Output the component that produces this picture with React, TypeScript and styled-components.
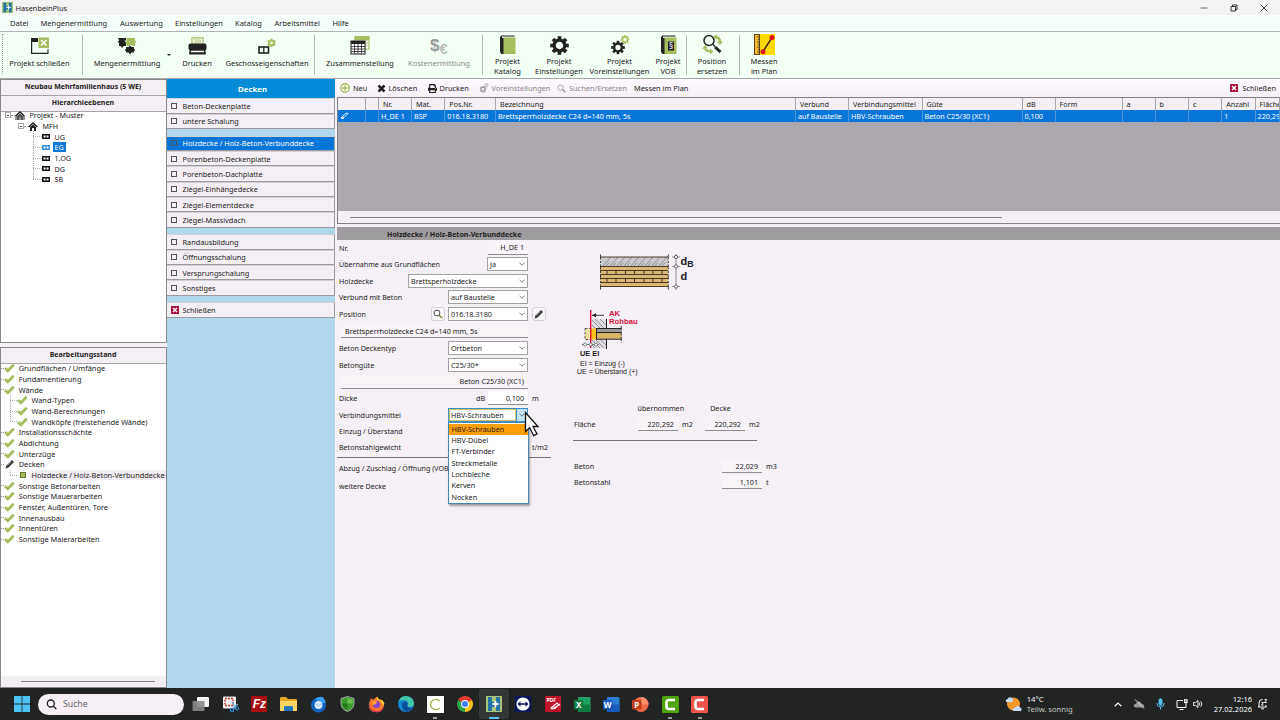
import { ReactNode } from "react";
import styled, { createGlobalStyle } from "styled-components";
import { FaCog, FaPrint } from "react-icons/fa";

const GREEN = "#a5bd5e";

const menuItems = [
  { label: "Datei", width: 30.5 },
  { label: "Mengenermittlung", width: 79.5 },
  { label: "Auswertung", width: 55 },
  { label: "Einstellungen", width: 60 },
  { label: "Katalog", width: 39.5 },
  { label: "Arbeitsmittel", width: 58 },
  { label: "Hilfe", width: 30 },
];

const deckenGroups = [
  ["Beton-Deckenplatte", "untere Schalung"],
  [
    "Holzdecke / Holz-Beton-Verbunddecke",
    "Porenbeton-Deckenplatte",
    "Porenbeton-Dachplatte",
    "Ziegel-Einhängedecke",
    "Ziegel-Elementdecke",
    "Ziegel-Massivdach",
  ],
  ["Randausbildung", "Öffnungsschalung", "Versprungschalung", "Sonstiges"],
];

const progress = [
  { label: "Grundflächen / Umfänge" },
  { label: "Fundamentierung" },
  { label: "Wände" },
  { label: "Wand-Typen", level: 1 },
  { label: "Wand-Berechnungen", level: 1 },
  { label: "Wandköpfe (freistehende Wände)", level: 1, last: true },
  { label: "Installationsschächte" },
  { label: "Abdichtung" },
  { label: "Unterzüge" },
  { label: "Decken", icon: "pen" },
  {
    label: "Holzdecke / Holz-Beton-Verbunddecke",
    level: 1,
    last: true,
    icon: "box",
  },
  { label: "Sonstige Betonarbeiten" },
  { label: "Sonstige Mauerarbeiten" },
  { label: "Fenster, Außentüren, Tore" },
  { label: "Innenausbau" },
  { label: "Innentüren" },
  { label: "Sonstige Malerarbeiten" },
];

const columns = [
  ["", ""],
  ["", ""],
  ["Nr.", "H_DE 1"],
  ["Mat.", "BSP"],
  ["Pos.Nr.", "016.18.3180"],
  ["Bezeichnung", "Brettsperrholzdecke C24 d=140 mm, 5s"],
  ["Verbund", "auf Baustelle"],
  ["Verbindungsmittel", "HBV-Schrauben"],
  ["Güte", "Beton C25/30 (XC1)"],
  ["dB", "0,100"],
  ["Form", ""],
  ["a", ""],
  ["b", ""],
  ["c", ""],
  ["Anzahl", "1"],
  ["Fläche", "220,292"],
];

const connectors = [
  "HBV-Schrauben",
  "HBV-Dübel",
  "FT-Verbinder",
  "Streckmetalle",
  "Lochbleche",
  "Kerven",
  "Nocken",
];

/* ---------- icons ---------- */

const AppIcon = ({ size = 11 }: { size?: number }) => (
  <svg width={size} height={size} viewBox="0 0 16 16">
    <rect width="16" height="16" fill="#a9c77c" />
    <path d="M2 1h4v5h4V1h4v14h-4v-4H6v4H2z" fill="#2572a4" />
    <path d="M9.500 5v6M6.500 8h6" stroke="#fff" strokeWidth="1.800" />
  </svg>
);

const ProjectCloseIcon = () => (
  <svg width="20" height="18" viewBox="0 0 20 18">
    <path d="M1 1h7v4H2.200V15.800H17.500V12H18.500V17H1z" fill="#222" />
    <rect x="8.500" y="0.500" width="10.500" height="10.500" fill={GREEN} />
    <path d="M11 3l5.500 5.500M16.500 3L11 8.500" stroke="#fff" strokeWidth="1.700" />
  </svg>
);

const PuzzleIcon = () => (
  <svg width="20" height="18" viewBox="0 0 20 18">
    <path d="M1 1h8v2l-1.500 1L9 5v4H6.500L5 11 3.500 9H2V6L.5 5 2 3.500z" fill="#222" />
    <path d="M9.500 1H18v2.500l1.200 1.200L18 6v3h-3l-1-1.500L12.500 9h-3V6.500L8 5l1.500-1z" fill={GREEN} />
    <path d="M9 10h2.500l1.500-1.500L14.500 10H17v2l1.500 1L17 14v1.500h-2.500L13 17.500 11.500 15.500H9V14l-1.500-1L9 12z" fill="#222" />
  </svg>
);

const PrinterIcon = () => (
  <svg width="19" height="18" viewBox="0 0 19 18">
    <path d="M4 7V.8h11V7z" fill="#fff" stroke={GREEN} strokeWidth="1.200" />
    <path d="M6 3h7M6 5h7" stroke={GREEN} />
    <rect x="0.500" y="6.500" width="18" height="7" rx="2" fill="#222" />
    <path d="M2 10.500h15l1 7H1z" fill="#222" />
    <path d="M3.200 13.800h12.600l.3 1.500H2.900z" fill="#fff" />
  </svg>
);

const StoreyIcon = () => (
  <svg width="18" height="18" viewBox="0 0 18 18">
    <g transform="translate(9 1.500)">
      <FaCog size={9} color={GREEN} />
    </g>
    <rect x="1" y="10" width="9.500" height="6" fill="none" stroke="#222" strokeWidth="1.600" />
    <path d="M5.800 10v6" stroke="#222" strokeWidth="1.300" />
  </svg>
);

const SheetIcon = () => (
  <svg width="20" height="19" viewBox="0 0 20 19">
    <rect x="5" y="0.600" width="14" height="12.500" fill="#fff" stroke={GREEN} />
    <path d="M5 1h14v3H5zM5 7h14M5 10h14M15 3v10M12 3v10" fill={GREEN} stroke={GREEN} strokeWidth=".8" />
    <rect x="1" y="5" width="14" height="13" fill="#fff" stroke="#222" />
    <path d="M1 5h14v3H1z" fill="#222" />
    <path d="M1 10.500h14M1 13h14M1 15.500h14M4.500 8v10M8 8v10M11.500 8v10" stroke="#222" strokeWidth=".8" />
  </svg>
);

const CostIcon = () => (
  <CostGlyph>
    <b>$</b>
    <i>€</i>
  </CostGlyph>
);

const BookIcon = ({ sign }: { sign?: string }) => (
  <svg width="17" height="20" viewBox="0 0 17 20">
    <path d="M2.500 0.500h13V19h-13L1 17V2z" fill="#222" />
    <path d="M3 1.500h13V3H3z" fill="#eee" />
    <rect x="4.500" y="2.500" width="12" height="16.500" fill={GREEN} />
    {sign && (
      <>
        <rect x="8" y="6.500" width="6" height="9" fill="#222" />
        <text x="11" y="13.800" fontSize="8" textAnchor="middle" fill="#fff">
          {sign}
        </text>
      </>
    )}
  </svg>
);

const Gear = ({ size, color }: { size: number; color: string }) => (
  <svg width={size} height={size} viewBox="-10 -10 20 20">
    <circle r="5.600" fill="none" stroke={color} strokeWidth="3.400" />
    {[0, 45, 90, 135, 180, 225, 270, 315].map((a) => (
      <rect key={a} x="-1.900" y="-9.800" width="3.800" height="4" fill={color} transform={`rotate(${a})`} />
    ))}
  </svg>
);

const GearsIcon = ({ size = 20, dark = "#222", light = GREEN }) => (
  <svg width={size} height={size} viewBox="0 0 20 20">
    <g transform="translate(1 5.500)">
      <Gear size={14} color={dark} />
    </g>
    <g transform="translate(10.500 0)">
      <Gear size={9} color={light} />
    </g>
  </svg>
);

const ReplaceIcon = () => (
  <svg width="21" height="21" viewBox="0 0 21 21">
    <circle cx="7" cy="6.500" r="5" fill="none" stroke="#222" strokeWidth="1.500" />
    <path d="M11 10.500l2 2" stroke="#222" strokeWidth="1.500" />
    <path d="M13 13l5.500 5" stroke="#222" strokeWidth="3" />
    <path d="M13 3c3 0 5 2 5 5" fill="none" stroke={GREEN} strokeWidth="2.400" />
    <path d="M14.500 0v6L11 3zM15 7.500h6L18 11z" fill={GREEN} />
    <path d="M9 17.500c-3 0-5-1-6-3" fill="none" stroke={GREEN} strokeWidth="2.400" />
    <path d="M8 14.500v6l3.500-3zM0 15l3-4 3 3z" fill={GREEN} />
  </svg>
);

const MeasureIcon = () => (
  <svg width="21" height="21" viewBox="0 0 21 21">
    <rect width="21" height="21" fill="#ffd900" />
    <rect x="0.500" y="0.500" width="5" height="20" fill="#f2b632" stroke="#5b4513" />
    <path d="M3 3h3M4 5.500h2M3 8h3M4 10.500h2M3 13h3M4 15.500h2M3 18h3" stroke="#333" strokeWidth=".8" />
    <path d="M9 17.500l9-14" stroke="#4a2c10" strokeWidth="1.500" />
    <circle cx="18" cy="3.500" r="2.500" fill="#e01018" />
    <circle cx="9" cy="17.800" r="2.500" fill="#e01018" />
  </svg>
);

const CloseIcon = () => (
  <svg width="8" height="8" viewBox="0 0 8 8">
    <rect width="8" height="8" fill="#a80f3c" />
    <path d="M2 2l4 4M6 2L2 6" stroke="#fff" strokeWidth="1.500" />
  </svg>
);

const CheckIcon = () => (
  <svg width="11" height="10" viewBox="0 0 11 10">
    <path d="M1 5.200l2.900 2.600L9.700 1.800" fill="none" stroke={GREEN} strokeWidth="2.900" />
  </svg>
);

const PenIcon = ({ size = 10 }: { size?: number }) => (
  <svg width={size} height={size} viewBox="0 0 10 10">
    <path d="M.5 9.500l1-3L7 1l2 2-5.500 5.500z" fill="#333" />
    <path d="M2.500 6.700l4-4" stroke="#ddd" strokeWidth=".6" />
  </svg>
);

const HouseIcon = ({ double }: { double?: boolean }) => (
  <svg width="10" height="9" viewBox="0 0 10 9">
    <path d="M.7 5L5 1l4.300 4" fill="none" stroke="#222" strokeWidth="1.400" />
    <path d="M2 5l3-2.500L8 5v4H6V6H4v3H2z" fill={double ? "#555" : "#222"} />
    {double && <path d="M1 9V4.500M9 9V4.500M5 6v3" stroke="#222" />}
  </svg>
);

const FloorIcon = ({ active }: { active?: boolean }) => (
  <svg width="8" height="5" viewBox="0 0 8 5">
    <rect width="8" height="5" fill={active ? "#2b8ede" : "#111"} />
    <path d="M1.500 1.500h2v2h-2zM4.500 1.500h2v2h-2z" fill="#fff" />
  </svg>
);

const Chevron = () => (
  <svg width="6" height="4" viewBox="0 0 6 4">
    <path d="M.5.7L3 3.200 5.500.7" fill="none" stroke="#555" strokeWidth=".8" />
  </svg>
);

const LensIcon = ({ size = 10, color = "#333" }) => (
  <svg width={size} height={size} viewBox="0 0 10 10">
    <circle cx="4" cy="4" r="2.900" fill="#fff" stroke={color} strokeWidth=".9" />
    <path d="M6.200 6.200L9.200 9.200" stroke={color === "#333" ? "#7d8f3b" : color} strokeWidth="1.600" />
  </svg>
);

/* ---------- drawings of the slab ---------- */

const SlabDrawing = () => (
  <Drawing width="104" height="38" viewBox="598 253 104 38">
    <rect x="600.500" y="257" width="67.500" height="9.500" fill="#c9c8cc" />
    {[603, 610, 617, 624, 631, 638, 645, 652, 659].map((x) => (
      <path key={x} d={`M${x} 266l8-9M${x + 3} 266l3-3.400`} stroke="#777" strokeWidth=".7" />
    ))}
    <rect x="600.500" y="266.500" width="67.500" height="20" fill="#dab873" />
    <path
      d="M600 257h68M600 266.500h68M600 270.500h68M600 274.500h68M600 278.500h68M600 282.500h68M600 286.500h68"
      stroke="#3a2a18"
      strokeWidth=".9"
    />
    <path
      d="M607 270.500v4M616 270.500v4M625.500 270.500v4M634.500 270.500v4M644 270.500v4M653 270.500v4M662 270.500v4M607 278.500v4M616 278.500v4M625.500 278.500v4M634.500 278.500v4M644 278.500v4M653 278.500v4M662 278.500v4"
      stroke="#3a2a18"
      strokeWidth=".9"
    />
    <path d="M600.500 254.500v36M668.300 254.500v36" stroke="#333" strokeWidth=".9" strokeDasharray="5 1.500 2 1.500" />
    <path d="M676 254v36M672 257h8M672 266.500h8M672 286.500h8" stroke="#777" strokeWidth=".8" />
    <g fill="#fff" stroke="#444" strokeWidth=".8">
      <circle cx="676" cy="257" r="1.600" />
      <circle cx="676" cy="266.500" r="1.600" />
      <circle cx="676" cy="286.500" r="1.600" />
    </g>
    <text x="680.500" y="265" fontSize="11" fontWeight="700">
      d
    </text>
    <text x="687.300" y="267" fontSize="8.800" fontWeight="700">
      B
    </text>
    <text x="680.500" y="279.500" fontSize="11" fontWeight="700">
      d
    </text>
  </Drawing>
);

const SupportDrawing = () => (
  <Drawing width="66" height="68" viewBox="574 309 66 68">
    <path d="M592 319h14.500v10H592zM592 339h14.500v9.500H592z" fill="#dedce0" />
    <path
      d="M592 325l4 4M592 320l9 9M595 319l10 10M600 319l6 6M592 345l3 3M592 340l8 8M595 339l9 9M600 339l6 6"
      stroke="#777"
      strokeWidth=".7"
    />
    <path d="M606.500 319v10M606.500 339v10" stroke="#222" />
    <rect x="585" y="328.500" width="6" height="11" fill="#f9e3a2" stroke="#333" strokeWidth=".8" strokeDasharray="2.500 1.500" />
    <rect x="591" y="328.500" width="5.500" height="11" fill="#fdc21c" />
    <rect x="596.500" y="328.500" width="25" height="4" fill="#999" />
    <rect x="596.500" y="332.500" width="25" height="6.500" fill="#d9b56c" />
    <path d="M596.500 328.500h25M596.500 332.500h25M596.500 339.200h25M596.500 328v11.500" stroke="#222" />
    <path d="M621.200 326v17" stroke="#333" strokeDasharray="4 1.500" />
    <path d="M590.700 310v38" stroke="#d4103c" strokeWidth="1.400" />
    <path d="M592 315.300h12" stroke="#222" strokeWidth=".9" />
    <path d="M592 315.300l4-2v4z" fill="#222" />
    <path d="M582 344.500h17" stroke="#555" strokeWidth=".8" />
    <g fill="#fff" stroke="#555" strokeWidth=".7">
      <circle cx="585" cy="344.500" r="1.500" />
      <circle cx="590.700" cy="344.500" r="1.500" />
      <circle cx="596" cy="344.500" r="1.500" />
    </g>
    <g fill="#d4103c" fontSize="7.700" fontWeight="700">
      <text x="609" y="315.700">AK</text>
      <text x="609" y="324.300">Rohbau</text>
    </g>
    <text x="580" y="356.300" fontSize="7.400" fontWeight="700">
      UE EI
    </text>
    <text x="580" y="366" fontSize="7">
      EI = Einzug (-)
    </text>
    <text x="577" y="374" fontSize="7">
      UE = Überstand (+)
    </text>
  </Drawing>
);

/* ---------- parts ---------- */

const Select = ({ value, width, open }: { value: string; width: number; open?: boolean }) => (
  <SelectBox $width={width} $open={open}>
    {open ? <SelectFocus>{value}</SelectFocus> : <span>{value}</span>}
    <SelectArrow $open={open}>
      <Chevron />
    </SelectArrow>
  </SelectBox>
);

const ToolButton = ({ icon, label, width, gap = 0, muted }: {
  icon: ReactNode;
  label: string[];
  width: number;
  gap?: number;
  muted?: boolean;
}) => (
  <Tool $width={width} $gap={gap} $muted={muted}>
    <ToolIcon>{icon}</ToolIcon>
    <ToolLabel $two={label.length > 1}>
      {label.map((line) => (
        <span key={line}>{line}</span>
      ))}
    </ToolLabel>
  </Tool>
);

function LeftPane() {
  return (
    <LeftColumn>
      <Panel $height={264}>
        <PanelTitle>Neubau Mehrfamilienhaus (5 WE)</PanelTitle>
        <PanelTitle>Hierarchieebenen</PanelTitle>
        <Tree>
          <TreeRow $indent={4}>
            <Expander />
            <Dash $width={4} />
            <HouseIcon double />
            <TreeLabel>Projekt - Muster</TreeLabel>
          </TreeRow>
          <TreeRow $indent={17}>
            <Expander />
            <Dash $width={4} />
            <HouseIcon />
            <TreeLabel>MFH</TreeLabel>
          </TreeRow>
          {["UG", "EG", "1.OG", "DG", "SB"].map((floor, i) => (
            <TreeRow key={floor} $indent={32}>
              <Branch $last={i === 4} $width={9} />
              <FloorIcon active={floor === "EG"} />
              <TreeLabel $active={floor === "EG"}>{floor}</TreeLabel>
            </TreeRow>
          ))}
        </Tree>
      </Panel>
      <Panel $grow>
        <PanelTitle>Bearbeitungsstand</PanelTitle>
        <ProgressTree>
          {progress.map(({ label, level, last, icon }) => (
            <TreeRow key={label} $indent={level ? 9 : 0} $shade={icon === "box"}>
              {level ? <Branch $last={last} $width={6.5} /> : <Dash $width={2.7} />}
              <ProgressIcon>
                {icon === "pen" ? <PenIcon /> : icon === "box" ? <GreenBox /> : <CheckIcon />}
              </ProgressIcon>
              <span>{label}</span>
            </TreeRow>
          ))}
        </ProgressTree>
        <PanelScroll>
          <ScrollLine $width={134} />
        </PanelScroll>
      </Panel>
    </LeftColumn>
  );
}

function DeckenPane() {
  return (
    <MiddleColumn>
      <MiddleTitle>Decken</MiddleTitle>
      {deckenGroups.map((group, g) => (
        <NavGroup key={g}>
          {group.map((label) => (
            <NavRow key={label} $active={label.startsWith("Holzdecke")}>
              <NavBox />
              {label}
            </NavRow>
          ))}
        </NavGroup>
      ))}
      <NavGroup>
        <NavRow>
          <CloseIcon />
          Schließen
        </NavRow>
      </NavGroup>
    </MiddleColumn>
  );
}

function Form() {
  return (
    <FormArea>
      <FormColumn>
        <Row $height={15.5}>
          <Label>Nr.</Label>
          <Value $width={40}>H_DE 1</Value>
        </Row>
        <Row $height={17}>
          <Label>Übernahme aus Grundflächen</Label>
          <Select value="Ja" width={41} />
        </Row>
        <Row $height={16.5}>
          <Label>Holzdecke</Label>
          <Select value="Brettsperholzdecke" width={120} />
        </Row>
        <Row $height={16.7}>
          <Label>Verbund mit Beton</Label>
          <Select value="auf Baustelle" width={80} />
        </Row>
        <Row $height={17}>
          <Label>Position</Label>
          <SmallButton>
            <LensIcon />
          </SmallButton>
          <Select value="016.18.3180" width={80} />
          <SmallButton $after>
            <PenIcon />
          </SmallButton>
        </Row>
        <Row $height={17}>
          <Value $width={187} $left>
            Brettsperrholzdecke C24 d=140 mm, 5s
          </Value>
        </Row>
        <Row $height={17}>
          <Label>Beton Deckentyp</Label>
          <Select value="Ortbeton" width={80} />
        </Row>
        <Row $height={16.8}>
          <Label>Betongüte</Label>
          <Select value="C25/30*" width={80} />
        </Row>
        <Row $height={16.8}>
          <Value $width={187}>Beton C25/30 (XC1)</Value>
        </Row>
        <Row $height={16.2}>
          <Label>Dicke</Label>
          <Unit $width={12}>dB</Unit>
          <Value $width={40} $white>
            0,100
          </Value>
          <Suffix>m</Suffix>
        </Row>
        <Row $height={16.5}>
          <Label>Verbindungsmittel</Label>
          <SelectAnchor>
            <Select value="HBV-Schrauben" width={80} open />
            <Options>
              {connectors.map((c, i) => (
                <Option key={c} $active={i === 0}>
                  {c}
                </Option>
              ))}
            </Options>
            <Pointer width="16" height="28" viewBox="0 0 16 28">
              <path
                d="M1.500 1.500v19l4.200-3.800 4 8 3.300-1.700-4-7.500h5z"
                fill="#fff"
                stroke="#111"
                strokeWidth="1.300"
              />
            </Pointer>
          </SelectAnchor>
        </Row>
        <Row $height={16}>
          <Label>Einzug / Überstand</Label>
        </Row>
        <Row $height={16.5}>
          <Label>Betonstahlgewicht</Label>
          <Suffix>t/m2</Suffix>
        </Row>
        <Rule $width={214} />
        <Row $height={20.5}>
          <Label>Abzug / Zuschlag / Öffnung (VOB)</Label>
        </Row>
        <Row $height={15}>
          <Label>weitere Decke</Label>
        </Row>
      </FormColumn>
      <ResultColumn>
        <SlabDrawing />
        <SupportDrawing />
        <ResultHead>
          <span>übernommen</span>
          <span>Decke</span>
        </ResultHead>
        <ResultRow $top={2}>
          <ResultLabel $width={65}>Fläche</ResultLabel>
          <Value $width={40}>220,292</Value>
          <ResultUnit>m2</ResultUnit>
          <Value $width={40}>220,292</Value>
          <ResultUnit>m2</ResultUnit>
        </ResultRow>
        <Rule $width={184} $top={8} />
        <ResultRow $top={17}>
          <ResultLabel $width={149}>Beton</ResultLabel>
          <Value $width={40}>22,029</Value>
          <ResultUnit>m3</ResultUnit>
        </ResultRow>
        <ResultRow>
          <ResultLabel $width={149}>Betonstahl</ResultLabel>
          <Value $width={40}>1,101</Value>
          <ResultUnit>t</ResultUnit>
        </ResultRow>
      </ResultColumn>
    </FormArea>
  );
}

function Workspace() {
  return (
    <WorkColumn>
      <Actions>
        <Action $width={35.5}>
          <svg width="10" height="10" viewBox="0 0 9 9">
            <circle cx="4.500" cy="4.500" r="3.800" fill="#fff" stroke={GREEN} strokeWidth="1.300" />
            <path d="M4.500 2v5M2 4.500h5" stroke={GREEN} strokeWidth="1.300" />
          </svg>
          Neu
        </Action>
        <Action $width={51}>
          <svg width="9" height="9" viewBox="0 0 9 9">
            <path d="M1.500 1.500l6 6M7.500 1.500l-6 6" stroke="#222" strokeWidth="2.500" />
          </svg>
          Löschen
        </Action>
        <Action $width={51}>
          <FaPrint size={9} color="#222" />
          Drucken
        </Action>
        <Action $width={78.5} $muted>
          <GearsIcon size={10} dark="#999" light="#aaa" />
          Voreinstellungen
        </Action>
        <Action $width={77} $muted $plain>
          <LensIcon size={9} color="#999" />
          Suchen/Ersetzen
        </Action>
        <Action $width={60} $plain>
          Messen im Plan
        </Action>
        <ActionEnd>
          <CloseIcon />
          Schließen
        </ActionEnd>
      </Actions>
      <Table>
        <TableRow>
          {columns.map(([head], i) => (
            <HeadCell key={i}>{head}</HeadCell>
          ))}
        </TableRow>
        <TableRow $selected>
          {columns.map(([, value], i) => (
            <Cell key={i}>
              {i === 0 ? (
                <svg width="9" height="7" viewBox="0 0 9 7">
                  <path d="M1 6l5-5 2 .5-4 4zM1 6.300h3" fill="none" stroke="#fff" strokeWidth=".9" />
                </svg>
              ) : (
                value
              )}
            </Cell>
          ))}
        </TableRow>
        <TableEmpty />
        <TableScroll>
          <ScrollLine $width={652} />
        </TableScroll>
      </Table>
      <FormTitle>Holzdecke / Holz-Beton-Verbunddecke</FormTitle>
      <Form />
    </WorkColumn>
  );
}

function Taskbar() {
  return (
    <Bar>
      <TaskApps>
        <TaskIcon $width={22}>
          <svg width="16" height="16" viewBox="0 0 16 16">
            <path d="M0 0h7.600v7.600H0zM8.400 0H16v7.600H8.400zM0 8.400h7.600V16H0zM8.400 8.400H16V16H8.400z" fill="#4cc2f5" />
          </svg>
        </TaskIcon>
        <Search>
          <svg width="11" height="11" viewBox="0 0 11 11">
            <circle cx="4.800" cy="4.500" r="3.500" fill="none" stroke="#222" strokeWidth="1.300" />
            <path d="M7.300 7l3 3" stroke="#222" strokeWidth="1.300" />
          </svg>
          Suche
        </Search>
        <TaskIcon>
          <svg width="17" height="16" viewBox="0 0 17 16">
            <rect x="5" y="1" width="12" height="10" rx="1" fill="#f2f2f2" />
            <rect x="0.500" y="5" width="12" height="10" rx="1" fill="#888" opacity=".9" />
          </svg>
        </TaskIcon>
        <TaskIcon>
          <svg width="17" height="17" viewBox="0 0 17 17">
            <rect x="1" y="0.500" width="13" height="12" rx="1" fill="#eee" />
            <rect x="3" y="2.500" width="8" height="7" fill="none" stroke="#b5301e" strokeWidth="1.300" strokeDasharray="1.800 1.200" />
            <path d="M10 6l4 7M16 8l-6 5" stroke="#68b2dd" strokeWidth="1.400" />
            <circle cx="10" cy="14" r="1.700" fill="none" stroke="#2c87c9" strokeWidth="1.200" />
            <circle cx="15" cy="12.500" r="1.500" fill="none" stroke="#2c87c9" strokeWidth="1.200" />
          </svg>
        </TaskIcon>
        <TaskIcon>
          <Tile $bg="#a80e10">
            <i>Fz</i>
          </Tile>
        </TaskIcon>
        <TaskIcon>
          <svg width="17" height="15" viewBox="0 0 17 15">
            <path d="M0 1.500Q0 0 1.500 0H6l2 2h8q1 0 1 1v11H0z" fill="#e8a826" />
            <path d="M0 4h17v9q0 1-1 1H1q-1 0-1-1z" fill="#ffd563" />
            <path d="M4 14V10q0-1 1-1h7q1 0 1 1v4z" fill="#1f78bd" />
          </svg>
        </TaskIcon>
        <TaskIcon>
          <svg width="17" height="17" viewBox="0 0 17 17">
            <circle cx="8.500" cy="9" r="7.500" fill="#1566c4" />
            <path d="M5 3q4-3.500 8.500-1.500l2.500 5-4 1z" fill="#3a9cf0" />
            <circle cx="8.500" cy="9" r="3.900" fill="#dcecff" />
            <path d="M5.500 7.500l3 2.500 3-2.500" fill="none" stroke="#8dbcf0" />
          </svg>
        </TaskIcon>
        <TaskIcon>
          <svg width="15" height="16" viewBox="0 0 15 16">
            <path d="M7.500.5l6.500 2v5q0 5.500-6.500 8Q1 13 1 7.500v-5z" fill="#3a9a2e" stroke="#aaa" />
            <path d="M7.500 2l5 1.500v4H7.500z" fill="#6ac24e" />
            <path d="M2.500 7.500h5v6q-5-2-5-6z" fill="#267a1c" />
          </svg>
        </TaskIcon>
        <TaskIcon>
          <svg width="17" height="17" viewBox="0 0 17 17">
            <path d="M2 5l1-3 2 2Q7 2 9 .5l2 3q4 0 5.300 4Q16 16 8.500 16.300T.8 9Q1 6.500 2 5z" fill="#ff7a2a" />
            <path d="M9 .5l2 3q4 0 5.300 4Q16 10 14 8 13 4 9 4z" fill="#ffcf3c" />
            <path d="M2 8q0 6 6.500 7 5 0 7-5-1 6.300-7 6.300T1 9z" fill="#e8305e" />
            <circle cx="8.500" cy="8.500" r="3.500" fill="#7d48d0" />
            <path d="M4 6q3-2 5 0l-1 2-3 1z" fill="#ffa436" />
          </svg>
        </TaskIcon>
        <TaskIcon>
          <svg width="16" height="16" viewBox="0 0 16 16">
            <circle cx="8" cy="8" r="8" fill="#1682cf" />
            <path d="M.5 6Q2 .2 8 0q7 .5 8 7 0 4-4.500 4-2.500 0-1.500-2 1-3-2-4.500Q3 3 .5 6z" fill="#44c7a8" />
            <path d="M4 9q0-3 3.500-3 2 0 2.200 2-1.700 2 .3 3.300 2 1.200 4.700 0-2 4-6.200 4.500Q4 14 4 9z" fill="#0b4e96" />
          </svg>
        </TaskIcon>
        <TaskIcon $dot>
          <svg width="17" height="17" viewBox="0 0 17 17">
            <rect width="17" height="17" fill="#fff" />
            <path d="M12.800 5.200a5.200 5.200 0 1 0 0 6.600" fill="none" stroke="#9bb54b" strokeWidth="1.300" />
          </svg>
        </TaskIcon>
        <TaskIcon>
          <svg width="16" height="16" viewBox="0 0 16 16">
            <path d="M8 8L1.100 4A8 8 0 0 1 14.900 4z" fill="#e33b2e" />
            <path d="M8 8L14.900 4A8 8 0 0 1 8 16z" fill="#fbc116" />
            <path d="M8 8v8A8 8 0 0 1 1.100 4z" fill="#2ba24c" />
            <circle cx="8" cy="8" r="3.900" fill="#fff" />
            <circle cx="8" cy="8" r="3" fill="#3f7fe8" />
          </svg>
        </TaskIcon>
        <TaskIcon $active>
          <AppIcon size={16} />
        </TaskIcon>
        <TaskIcon>
          <svg width="16" height="16" viewBox="0 0 16 16">
            <rect width="16" height="16" rx="2" fill="#0b1660" />
            <circle cx="8" cy="8" r="6.600" fill="#fff" />
            <path d="M2.500 8l3-2.700v1.900h5V5.300l3 2.700-3 2.700V8.800h-5v1.900z" fill="#0b1660" />
          </svg>
        </TaskIcon>
        <TaskIcon>
          <svg width="16" height="16" viewBox="0 0 16 16">
            <rect width="16" height="16" rx="1" fill="#c0142b" />
            <text x="1.500" y="5.500" fontSize="5" fontWeight="700" fill="#fff">
              PDF
            </text>
            <path d="M6 12l6-5 2 2-7 4zM9 13l6-5" fill="none" stroke="#fff" strokeWidth="1.200" />
          </svg>
        </TaskIcon>
        {[
          ["X", "#21a366", "#107c41"],
          ["W", "#2b7cd3", "#185abd"],
        ].map(([letter, light, dark]) => (
          <TaskIcon key={letter}>
            <svg width="17" height="15" viewBox="0 0 17 15">
              <rect x="4" width="12.500" height="15" rx="1" fill={light} />
              <path d="M4 7.500h12.500V14q0 1-1 1H5q-1 0-1-1z" fill={dark} />
              <rect y="3" width="9.500" height="9.500" rx="1" fill={dark} />
              <text x="4.700" y="10.500" fontSize="8" fontWeight="700" textAnchor="middle" fill="#fff">
                {letter}
              </text>
            </svg>
          </TaskIcon>
        ))}
        <TaskIcon>
          <svg width="17" height="15" viewBox="0 0 17 15">
            <circle cx="9" cy="7.500" r="7.500" fill="#ed6c47" />
            <path d="M9 0a7.500 7.500 0 0 1 7.500 7.500H9z" fill="#ff8f6b" />
            <rect y="3" width="9.500" height="9.500" rx="1" fill="#c43e1c" />
            <text x="4.700" y="10.500" fontSize="8" fontWeight="700" textAnchor="middle" fill="#fff">
              P
            </text>
          </svg>
        </TaskIcon>
        {["#4da30b", "#ee544c"].map((color) => (
          <TaskIcon key={color} $dot>
            <svg width="17" height="17" viewBox="0 0 17 17">
              <rect width="17" height="17" rx="1.500" fill={color} />
              <path d="M13 4H7Q4.500 4 4.500 6.500v4Q4.500 13 7 13h6" fill="none" stroke="#fff" strokeWidth="2.600" />
            </svg>
          </TaskIcon>
        ))}
      </TaskApps>
      <Weather>
        <svg width="17" height="16" viewBox="0 0 17 16">
          <circle cx="8.500" cy="8" r="6.500" fill="#f3962c" />
          <path d="M1 6q-1-2.500 1.500-3Q3.500.5 6 1.500 8 1.500 8 4t-2 2.200z" fill="#c9d8f4" />
          <path d="M9 15q-2-.5-1-2.500 1-1 2-.5Q11 9.500 13.500 10q2 .5 2 2 1.500.5 1 2t-2 1z" fill="#c9d8f4" />
        </svg>
        <WeatherText>
          <span>14°C</span>
          <span>Teilw. sonnig</span>
        </WeatherText>
      </Weather>
      <Tray>
        <svg width="8" height="5" viewBox="0 0 8 5">
          <path d="M.7 4.200L4 1l3.300 3.200" fill="none" stroke="#fff" strokeWidth="1.200" />
        </svg>
        <svg width="12" height="10" viewBox="0 0 12 10">
          <path d="M3 8.500Q.5 8.500.7 6.500T3 4.700Q4 2 6.500 2.500q2 .5 2.300 2.500 2.500 0 2.500 2T9.500 8.500z" fill="#999" />
          <path d="M2 .5l9 9" stroke="#ddd" />
        </svg>
        <svg width="9" height="12" viewBox="0 0 9 12">
          <rect x="3" y="0.700" width="3" height="6.500" rx="1.500" fill="#5cc0e8" stroke="#5cc0e8" />
          <path d="M.8 5q0 4 3.700 4t3.700-4M4.500 9v2.500" fill="none" stroke="#5cc0e8" />
        </svg>
        <NetGroup>
          <svg width="12" height="11" viewBox="0 0 12 11">
            <path d="M7 1.500H1v7h9V5M3.500 10.500h4M10 1v4" fill="none" stroke="#fff" />
            <rect x="8.500" y="0.600" width="2.700" height="3" fill="none" stroke="#fff" strokeWidth=".9" />
          </svg>
          <svg width="10" height="10" viewBox="0 0 10 10">
            <path d="M.6 3.500h2L5 1.500v7L2.600 6.500h-2zM6.300 3.500q1 1.500 0 3M7.800 2.200q2 2.800 0 5.600" fill="none" stroke="#fff" strokeWidth=".9" />
          </svg>
        </NetGroup>
      </Tray>
      <Clock>
        <span>12:16</span>
        <span>27.02.2026</span>
      </Clock>
      <svg width="11" height="12" viewBox="0 0 11 12">
        <path d="M1 9h8.500M2 9V5q0-3.500 3.500-3.500M9 9V7M4 10.800h3" fill="none" stroke="#fff" />
        <path d="M4.500 4.500h2l-2 2.500h2M7.500 1.500h2.300L7.500 4.500h2.300" fill="none" stroke="#fff" strokeWidth=".9" />
      </svg>
    </Bar>
  );
}

export default function App() {
  return (
    <Window>
      <GlobalStyle />
      <TitleBar>
        <AppIcon />
        <AppName>HasenbeinPlus</AppName>
        <WindowButtons>
          <svg width="8" height="8" viewBox="0 0 8 8">
            <path d="M.5 4h7" stroke="#444" strokeWidth=".8" />
          </svg>
          <svg width="8" height="8" viewBox="0 0 8 8">
            <path d="M1 2.500h4.500V7H1zM2.500 2.500V1H7v4.500H5.500" fill="none" stroke="#222" strokeWidth=".9" />
          </svg>
          <svg width="8" height="8" viewBox="0 0 8 8">
            <path d="M.8.8l6.400 6.400M7.200.8L.8 7.200" stroke="#222" strokeWidth=".9" />
          </svg>
        </WindowButtons>
      </TitleBar>
      <MenuBar>
        {menuItems.map(({ label, width }) => (
          <MenuItem key={label} $width={width}>
            {label}
          </MenuItem>
        ))}
      </MenuBar>
      <Toolbar>
        <Grip />
        <ToolButton icon={<ProjectCloseIcon />} label={["Projekt schließen"]} width={70} gap={1.5} />
        <Divider $gap={7} />
        <ToolButton icon={<PuzzleIcon />} label={["Mengenermittlung"]} width={80} gap={4.5} />
        <MoreArrow />
        <ToolButton icon={<PrinterIcon />} label={["Drucken"]} width={40} gap={6} />
        <ToolButton icon={<StoreyIcon />} label={["Geschosseigenschaften"]} width={90} gap={5} />
        <Divider $gap={2} />
        <ToolButton icon={<SheetIcon />} label={["Zusammenstellung"]} width={80} gap={5} />
        <ToolButton icon={<CostIcon />} label={["Kostenermittlung"]} width={70} gap={4} muted />
        <Divider $gap={8} />
        <ToolButton icon={<BookIcon />} label={["Projekt", "Katalog"]} width={40} gap={4.5} />
        <ToolButton icon={<Gear size={19} color="#222" />} label={["Projekt", "Einstellungen"]} width={60} gap={1.5} />
        <ToolButton icon={<GearsIcon />} label={["Projekt", "Voreinstellungen"]} width={60} gap={0.5} />
        <ToolButton icon={<BookIcon sign="§" />} label={["Projekt", "VOB"]} width={30} gap={3.5} />
        <Divider $gap={3} />
        <ToolButton icon={<ReplaceIcon />} label={["Position", "ersetzen"]} width={40} gap={5} />
        <Divider $gap={7} />
        <ToolButton icon={<MeasureIcon />} label={["Messen", "im Plan"]} width={40} gap={4} />
      </Toolbar>
      <Body>
        <LeftPane />
        <DeckenPane />
        <Workspace />
      </Body>
      <Taskbar />
    </Window>
  );
}

/* ---------- styles ---------- */

const GlobalStyle = createGlobalStyle`
  * {
    box-sizing: border-box;
  }

  body {
    margin: 0;
    overflow: hidden;
    font-family: "Noto Sans", "Open Sans", sans-serif;
    font-size: 7.2px;
    color: #222;
    white-space: nowrap;
  }

  svg {
    flex: none;
  }
`;

const Window = styled.div`
  width: 1280px;
  height: 720px;
  display: flex;
  flex-direction: column;
  overflow: hidden;
  background: #f5f0f5;
`;

const TitleBar = styled.header`
  height: 15px;
  flex: none;
  display: flex;
  align-items: center;
  padding: 0 12px 0 2px;
  background: #f3f3f4;
`;

const AppName = styled.span`
  margin-left: 2.5px;
  font-size: 7.4px;
`;

const WindowButtons = styled.div`
  margin-left: auto;
  display: flex;
  gap: 22px;
`;

const MenuBar = styled.nav`
  height: 17px;
  flex: none;
  display: flex;
  align-items: center;
  padding-left: 10px;
  background: #f6fffb;
  border-bottom: 1px solid #b2b4b4;
`;

const MenuItem = styled.span<{ $width: number }>`
  width: ${({ $width }) => $width}px;
  font-size: 7.5px;
`;

const Toolbar = styled.div`
  height: 47px;
  flex: none;
  display: flex;
  background: #f4fff6;
  border-bottom: 1px solid #a4a6a6;
`;

const Grip = styled.div`
  height: 40px;
  margin: 2px 0 0 2px;
  border-left: 1px dotted #999;
`;

const Tool = styled.div<{ $width: number; $gap: number; $muted?: boolean }>`
  width: ${({ $width }) => $width}px;
  margin-left: ${({ $gap }) => $gap}px;
  display: flex;
  flex-direction: column;
  align-items: center;
  font-size: 7.5px;
  color: ${({ $muted }) => ($muted ? "#888" : "#222")};
`;

const ToolIcon = styled.div`
  height: 23px;
  display: flex;
  align-items: flex-end;
`;

const ToolLabel = styled.div<{ $two: boolean }>`
  display: flex;
  flex-direction: column;
  align-items: center;
  line-height: 10px;
  margin-top: ${({ $two }) => ($two ? 0.6 : 2.6)}px;
`;

const Divider = styled.div<{ $gap: number }>`
  width: 1px;
  height: 40px;
  margin: 3px 0 0 ${({ $gap }) => $gap}px;
  background: #b6bab7;
`;

const MoreArrow = styled.div`
  width: 4px;
  margin-top: 22px;
  height: 2px;
  border: 2px solid transparent;
  border-top-color: #222;
`;

const CostGlyph = styled.div`
  display: flex;
  font: 700 17px/18px "Liberation Sans", sans-serif;
  color: #999;

  i {
    font-style: normal;
    font-size: 15px;
    color: #bbb;
    margin: 3px 0 -3px 0;
  }
`;

const Body = styled.main`
  flex: 1;
  min-height: 0;
  display: flex;
`;

const LeftColumn = styled.aside`
  width: 167px;
  flex: none;
  display: flex;
  flex-direction: column;
  gap: 4px;
`;

const Panel = styled.section<{ $height?: number; $grow?: boolean }>`
  height: ${({ $height }) => ($height ? `${$height}px` : "auto")};
  flex: ${({ $grow }) => ($grow ? 1 : "none")};
  display: flex;
  flex-direction: column;
  background: #fff;
  border: 1px solid #8a888b;
`;

const PanelTitle = styled.h2`
  margin: 0;
  height: 16px;
  flex: none;
  display: flex;
  align-items: center;
  justify-content: center;
  padding: 0 1px 2px 0;
  font-size: 7px;
  background: #f4eff4;
  border-bottom: 1px solid #a5a3a6;
`;

const Tree = styled.div`
  display: flex;
  flex-direction: column;
  margin-top: -2px;
`;

const ProgressTree = styled(Tree)`
  margin-top: -1px;
  flex: 1;
  font-size: 7.4px;
`;

const TreeRow = styled.div<{ $indent: number; $shade?: boolean }>`
  height: 10.68px;
  flex: none;
  display: flex;
  align-items: center;
  margin-left: ${({ $indent }) => $indent}px;
  background: ${({ $shade }) =>
    $shade ? "linear-gradient(90deg, transparent 20px, #f2edf2 20px)" : "none"};
`;

const TreeLabel = styled.span<{ $active?: boolean }>`
  margin-left: 2.5px;
  padding: 0 2px;
  line-height: 10px;
  color: ${({ $active }) => ($active ? "#fff" : "#222")};
  background: ${({ $active }) => ($active ? "#0a78d4" : "none")};
`;

const Expander = styled.span`
  width: 6px;
  height: 6px;
  border: 1px solid #aaa;
  background: linear-gradient(#555, #555) center / 2px 1px no-repeat;
`;

const Dash = styled.span<{ $width: number }>`
  width: ${({ $width }) => $width}px;
  border-top: 1px dotted #999;
`;

const Branch = styled.span<{ $last?: boolean; $width: number }>`
  width: ${({ $width }) => $width}px;
  height: 100%;
  background:
    repeating-linear-gradient(#aaa 0 1px, transparent 1px 2px) 0 0 / 1px
      ${({ $last }) => ($last ? "55%" : "100%")} no-repeat,
    repeating-linear-gradient(90deg, #aaa 0 1px, transparent 1px 2px) 0 50% /
      100% 1px no-repeat;
`;

const ProgressIcon = styled.span`
  width: 12px;
  margin-right: 3px;
  display: flex;
  justify-content: center;
`;

const GreenBox = styled.span`
  width: 6px;
  height: 6px;
  background: ${GREEN};
  border: 1px solid #65752f;
`;

const PanelScroll = styled.div`
  height: 11px;
  padding: 5px 0 0 20px;
  background: #f4eff4;
`;

const ScrollLine = styled.div<{ $width: number }>`
  width: ${({ $width }) => $width}px;
  height: 1px;
  background: #858387;
`;

const MiddleColumn = styled.aside`
  width: 168px;
  flex: none;
  background: #b1d8ea;
  font-size: 7.3px;
`;

const MiddleTitle = styled.h1`
  margin: 0;
  height: 19.3px;
  display: flex;
  align-items: center;
  justify-content: center;
  padding-left: 3px;
  font-size: 7.8px;
  color: #fff;
  background: #048bd8;
`;

const NavGroup = styled.div`
  margin-bottom: 6.7px;
`;

const NavRow = styled.div<{ $active?: boolean }>`
  height: 15.35px;
  display: flex;
  align-items: center;
  padding-left: 4px;
  gap: 3.5px;
  color: ${({ $active }) => ($active ? "#fff" : "#222")};
  background: ${({ $active }) => ($active ? "#0875d8" : "#f4eff4")};
  border: 1px solid #9b9a9e;
  border-top-color: #d2d0d4;
  border-left: 0;
`;

const NavBox = styled.span`
  width: 6px;
  height: 6px;
  margin: 0 2px 0 0;
  border: 1px solid #555;
`;

const WorkColumn = styled.section`
  flex: 1;
  min-width: 0;
  display: flex;
  flex-direction: column;
  padding-left: 2px;
`;

const Actions = styled.div`
  height: 18px;
  flex: none;
  display: flex;
  align-items: center;
  padding: 0 4px 0 3px;
  background: linear-gradient(#fffaff, #f5f0f5);
`;

const Action = styled.div<{ $width: number; $muted?: boolean; $plain?: boolean }>`
  width: ${({ $width }) => $width}px;
  height: 12px;
  display: flex;
  align-items: center;
  gap: 3px;
  font-size: 7.4px;
  color: ${({ $muted }) => ($muted ? "#888" : "#222")};

  & + & {
    border-left: ${({ $plain }) => ($plain ? 0 : 1)}px solid #d0ccd0;
    padding-left: ${({ $plain }) => ($plain ? 1 : 3.5)}px;
  }
`;

const ActionEnd = styled.div`
  margin-left: auto;
  display: flex;
  align-items: center;
  gap: 4px;
  font-size: 7.4px;
`;

const Table = styled.div`
  height: 127px;
  flex: none;
  display: flex;
  flex-direction: column;
  border: 1px solid #858086;
  border-right: 0;
`;

const TableRow = styled.div<{ $selected?: boolean }>`
  height: 12px;
  flex: none;
  display: grid;
  grid-template-columns: 28px 13px 33px 33.3px 50.7px 300px 53px 73.6px 100px 33px 67px 33px 33.4px 33.3px 33.3px 1fr;
  color: ${({ $selected }) => ($selected ? "#fff" : "#222")};
  background: ${({ $selected }) => ($selected ? "#0876d9" : "#f4eff4")};
`;

const HeadCell = styled.div`
  display: flex;
  align-items: center;
  min-width: 0;
  overflow: hidden;
  padding-left: 4px;
  border-right: 1px solid #a9a5aa;
`;

const Cell = styled(HeadCell)`
  padding: 0 0 1px 2px;
  border-right-color: #4c96da;
`;

const TableEmpty = styled.div`
  flex: 1;
  background: #ada8ae;
`;

const TableScroll = styled.div`
  height: 12px;
  padding: 6px 0 0 12px;
  background: #f4eff4;
`;

const FormTitle = styled.h2`
  margin: 3px 0 0;
  height: 13px;
  flex: none;
  display: flex;
  align-items: center;
  padding-left: 50px;
  font-size: 7.05px;
  background: #9f9ca0;
`;

const FormArea = styled.div`
  flex: 1;
  display: flex;
`;

const FormColumn = styled.div`
  width: 236px;
  flex: none;
`;

const Row = styled.div<{ $height: number }>`
  height: ${({ $height }) => $height}px;
  display: flex;
  align-items: center;
  justify-content: flex-end;
  padding: 0 45px 0 2px;
`;

const Label = styled.span`
  flex: 1;
  width: 0;
  font-size: 7.1px;
`;

const Value = styled.span<{ $width: number; $left?: boolean; $white?: boolean }>`
  width: ${({ $width }) => $width}px;
  height: 14px;
  display: flex;
  align-items: center;
  justify-content: ${({ $left }) => ($left ? "flex-start" : "flex-end")};
  padding: 0 4px;
  background: ${({ $white }) => ($white ? "#fff" : "#f7f3f7")};
  border-bottom: 1px solid #8f8b90;
`;

const Unit = styled.span<{ $width: number }>`
  width: ${({ $width }) => $width}px;
`;

const Suffix = styled.span`
  width: 0;
  position: relative;
  left: 4px;
`;

const SelectBox = styled.div<{ $width: number; $open?: boolean }>`
  width: ${({ $width }) => $width}px;
  height: 14px;
  flex: none;
  display: flex;
  align-items: center;
  justify-content: space-between;
  padding-left: ${({ $open }) => ($open ? 0 : 2)}px;
  background: #fff;
  border: 1px solid ${({ $open }) => ($open ? "#3c8fc4" : "#a3a0a4")};
`;

const SelectFocus = styled.span`
  height: 12px;
  width: 67px;
  padding-left: 1px;
  line-height: 10px;
  border: 1px solid #d8c66a;
`;

const SelectArrow = styled.span<{ $open?: boolean }>`
  width: 11px;
  height: 12px;
  display: flex;
  align-items: center;
  justify-content: center;
  background: ${({ $open }) => ($open ? "#c6e2f8" : "none")};
  border-left: 1px solid ${({ $open }) => ($open ? "#3c8fc4" : "transparent")};
`;

const SelectAnchor = styled.div`
  position: relative;
`;

const Options = styled.div`
  position: absolute;
  z-index: 1;
  top: 14px;
  left: 0;
  width: 81px;
  padding-top: 1px;
  background: #fff;
  border: 1px solid #4a86ad;
  box-shadow: 1px 2px 2px rgba(0, 0, 0, 0.35);
`;

const Option = styled.div<{ $active: boolean }>`
  height: 11.3px;
  line-height: 11px;
  padding-left: 2.5px;
  background: ${({ $active }) => ($active ? "#ff9f05" : "none")};
`;

const Pointer = styled.svg`
  position: absolute;
  z-index: 2;
  top: 3px;
  left: 75.5px;
`;

const SmallButton = styled.span<{ $after?: boolean }>`
  width: 14px;
  height: 14px;
  flex: none;
  display: flex;
  align-items: center;
  justify-content: center;
  background: #fbf8fb;
  border: 1px solid #d5d0d6;
  border-radius: 3px;
  margin: ${({ $after }) => ($after ? "0 -18px 0 4px" : "0 3px 0 0")};
`;

const Rule = styled.div<{ $width: number; $top?: number }>`
  width: ${({ $width }) => $width}px;
  height: 1px;
  margin-top: ${({ $top }) => $top ?? 1.5}px;
  background: #777478;
`;

const ResultColumn = styled.div`
  padding-top: 13px;
  display: flex;
  flex-direction: column;
`;

const Drawing = styled.svg`
  font-family: "Liberation Sans", sans-serif;
  fill: #222;
  margin: 0 0 18px 25px;

  & + & {
    margin: 0 0 26px 1px;
  }
`;

const ResultHead = styled.div`
  height: 11px;
  display: flex;
  gap: 26px;
  padding-left: 64.5px;
`;

const ResultRow = styled.div<{ $top?: number }>`
  height: 16px;
  margin-top: ${({ $top }) => $top ?? 0}px;
  display: flex;
  align-items: center;
`;

const ResultLabel = styled.span<{ $width: number }>`
  width: ${({ $width }) => $width}px;
  padding-left: 1px;
`;

const ResultUnit = styled.span`
  width: 27px;
  padding-left: 4px;
`;

const Bar = styled.footer`
  height: 32px;
  flex: none;
  display: flex;
  align-items: center;
  padding: 0 12px 0 11px;
  color: #fff;
  background: #212423;
`;

const TaskApps = styled.div`
  display: flex;
  align-items: center;
`;

const TaskIcon = styled.div<{ $width?: number; $active?: boolean; $dot?: boolean }>`
  width: ${({ $width }) => $width ?? 29.35}px;
  height: 30px;
  display: flex;
  align-items: center;
  justify-content: center;
  background:
    linear-gradient(
        ${({ $active, $dot }) =>
          $active ? "#5cc0f0, #5cc0f0" : $dot ? "#999, #999" : "transparent, transparent"}
      )
      center 28px / ${({ $active }) => ($active ? 10 : 4)}px 2px no-repeat,
    ${({ $active }) => ($active ? "#333736" : "transparent")};
  border-radius: 3px;
`;

const Search = styled.div`
  width: 146px;
  height: 21px;
  margin: 0 2px 0 5px;
  display: flex;
  align-items: center;
  gap: 6px;
  padding-left: 8px;
  border-radius: 11px;
  font-size: 8.7px;
  color: #666;
  background: #f6f0f6;
`;

const Tile = styled.span<{ $bg: string }>`
  width: 16px;
  height: 16px;
  display: flex;
  align-items: center;
  justify-content: center;
  font: 700 12px "Liberation Sans", sans-serif;
  background: ${({ $bg }) => $bg};
`;

const Weather = styled.div`
  margin-left: auto;
  display: flex;
  align-items: center;
  gap: 5px;
`;

const WeatherText = styled.div`
  display: flex;
  flex-direction: column;
  font-size: 7.6px;
  line-height: 10.5px;

  span + span {
    color: #c4c4c4;
  }
`;

const Tray = styled.div`
  margin-left: 41px;
  display: flex;
  align-items: center;
  gap: 11.2px;
`;

const NetGroup = styled.div`
  display: flex;
  align-items: center;
  gap: 4.5px;
`;

const Clock = styled.div`
  margin: 0 5px 0 11px;
  display: flex;
  flex-direction: column;
  align-items: flex-end;
  font-size: 7.5px;
  line-height: 10.5px;
`;
